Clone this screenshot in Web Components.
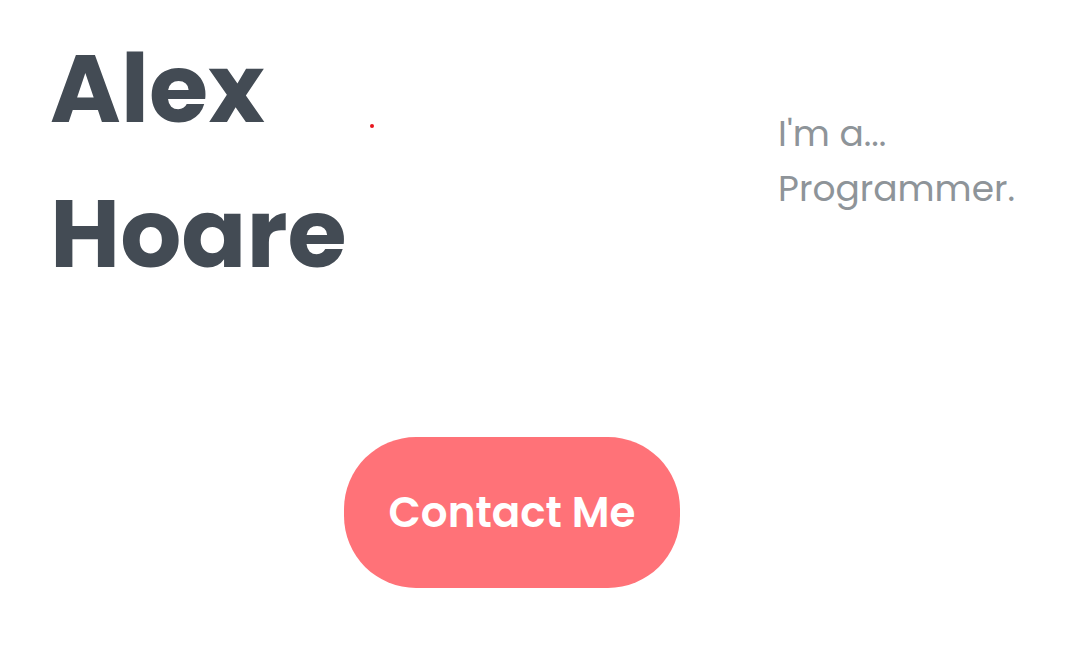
<!DOCTYPE html>
<html lang="en">
<head>
<meta charset="utf-8">
<title>Alex Hoare</title>
<style>
body { margin: 0; background: #fff; font-family: Poppins, Inter, "Open Sans", sans-serif; }
</style>
</head>
<body>
<intro-page>
  <hero-name slot="name"><span>Alex</span><span>Hoare</span></hero-name>
  <accent-dot slot="dot"></accent-dot>
  <role-text slot="role"><span>I'm a...</span><span>Programmer.</span></role-text>
  <contact-button slot="action">Contact Me</contact-button>
</intro-page>
<script>
const define = (name, html) => customElements.define(name, class extends HTMLElement {
  constructor() {
    super();
    this.attachShadow({ mode: "open" }).innerHTML = html;
  }
});

define("hero-name", `<style>
  :host { display: block; }
  h1 { margin: 0; font-size: 96px; line-height: 145px; font-weight: 700; color: #434b54; }
  ::slotted(span) { display: block; }
</style><h1><slot></slot></h1>`);

define("accent-dot", `<style>
  :host { display: block; width: 4px; height: 4px; border-radius: 50%; background: #e8141c; }
</style>`);

define("role-text", `<style>
  :host { display: block; }
  p { margin: 0; font-size: 36px; line-height: 55px; color: #8e9499; white-space: nowrap; }
  ::slotted(span) { display: block; }
</style><p><slot></slot></p>`);

define("contact-button", `<style>
  :host { display: block; }
  button { display: block; border: 0; border-radius: 72px; padding: 44px; min-width: 336px;
    background: #ff7278; color: #fff; font: 600 42px/63px Poppins, Inter, "Open Sans", sans-serif;
    white-space: nowrap; cursor: pointer; }
</style><button type="button"><slot></slot></button>`);

define("intro-page", `<style>
  :host { display: block; }
  header { display: flex; align-items: flex-start; padding: 16px 50px 0; }
  .dot { padding: 108px 0 0 23px; }
  .role { margin-left: auto; padding-top: 90px; }
  footer { display: flex; justify-content: center; padding: 131px 41px 60px 0; }
</style>
<header><slot name="name"></slot><div class="dot"><slot name="dot"></slot></div><div class="role"><slot name="role"></slot></div></header>
<footer><slot name="action"></slot></footer>`);
</script>
</body>
</html>
